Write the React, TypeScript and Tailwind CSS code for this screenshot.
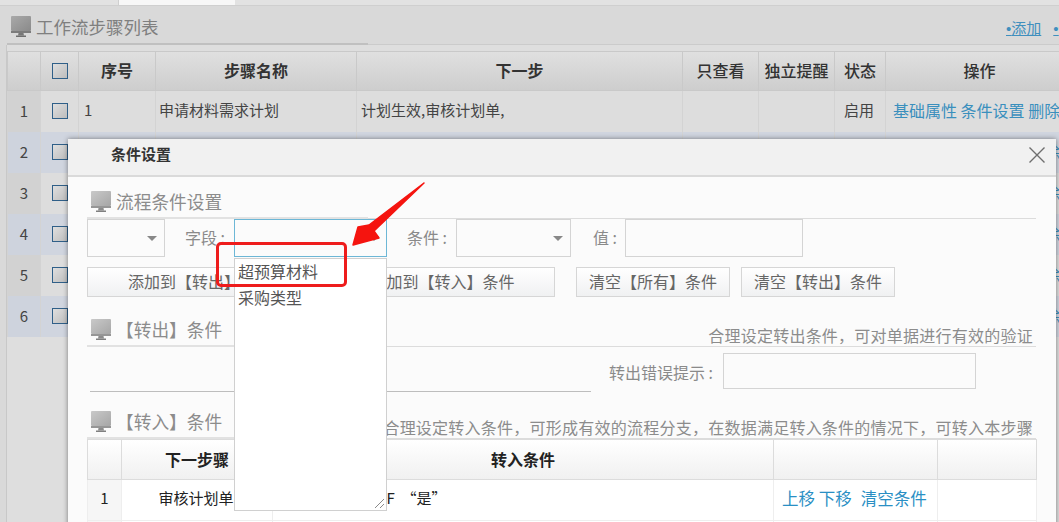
import React from "react";

const CJK = '"Noto Sans CJK SC", "Liberation Sans", sans-serif';

function Monitor({ dim = false }: { dim?: boolean }) {
  const id = dim ? "mon-a" : "mon-b";
  return (
    <svg width="20" height="21" viewBox="0 0 20 21" className="shrink-0">
      <defs>
        <linearGradient id={id} x1="0" y1="0" x2="1" y2="1">
          <stop offset="0" stopColor={dim ? "#a9a9a9" : "#c9c9c9"} />
          <stop offset="1" stopColor={dim ? "#8a8a8a" : "#a6a6a6"} />
        </linearGradient>
      </defs>
      <rect x="0" y="0" width="20" height="15" rx="1" fill={`url(#${id})`} />
      <rect x="0" y="15" width="20" height="2" fill={dim ? "#7c7c7c" : "#969696"} />
      <path d="M7.5 17h5l.5 2.5H7z" fill={dim ? "#777" : "#8c8c8c"} />
      <rect x="5" y="19.5" width="10" height="1.5" fill={dim ? "#6e6e6e" : "#808080"} />
    </svg>
  );
}

function SectionTitle({ title, hint }: { title: string; hint?: string }) {
  return (
    <div className="flex h-[30px] items-start justify-between border-b border-[#dcdcdc]">
      <div className="flex h-[30px] w-[281px] items-center gap-[5px] border-b-2 border-[#e2e2e2] pb-[3px] pl-[4px] text-[17.7px] leading-[26px] text-[#8c8c8c]">
        <Monitor />
        <span className="-mt-[1px]">{title}</span>
      </div>
      {hint && <span className="whitespace-nowrap pt-[7px] pr-[3px] text-[16px] leading-[22px] tracking-[0.24px] text-[#8c8c8c]">{hint}</span>}
    </div>
  );
}

function Select({ w, active = false }: { w: string; active?: boolean }) {
  return (
    <div
      className={`flex h-[38px] items-center justify-end border pr-[6px] ${w} ${
        active ? "border-[#6db7d6]" : "border-[#d4d4d4]"
      }`}
    >
      <span className="mr-[1px] h-0 w-0 border-x-[5px] border-t-[5px] border-x-transparent border-t-[#888]" />
    </div>
  );
}

function Btn({ label, w }: { label: string; w: string }) {
  return (
    <div
      className={`flex h-[30px] items-center justify-center border border-[#d6d6d6] bg-gradient-to-b from-white to-[#f0f1f2] pb-[3px] text-[16px] text-[#666] ${w}`}
    >
      {label}
    </div>
  );
}

function Check() {
  return (
    <span className="mx-auto block h-[16px] w-[16px] border border-[#2f5f88] bg-gradient-to-br from-[#dfdfdf] to-[#bdbdbd]" />
  );
}

const rows = [1, 2, 3, 4, 5, 6];

export default function App() {
  return (
    <div
      className="relative h-[522px] w-[1059px] overflow-hidden bg-[#d9d9d9]"
      style={{ fontFamily: CJK }}
    >
      {/* top tabs */}
      <div className="flex h-[6px] border-b border-[#cfcfcf] bg-[#e2e2e2] pl-[7px]">
        <div className="w-[112px] border-r border-[#cfcfcf]" />
        <div className="w-[116px] bg-[#f7f7f7]" />
      </div>

      {/* title */}
      <div className="ml-[7px] flex h-[39px] items-start justify-between border-b border-[#cbcbcb]">
        <div className="flex h-[39px] w-[361px] items-start gap-[5px] border-b-2 border-[#c0c0c0] pl-[4px] pt-[10px] text-[17.5px] leading-[24px] text-[#7f7f7f]">
          <Monitor dim />
          <span className="-mt-[1px]">工作流步骤列表</span>
        </div>
        <div className="flex w-[53px] gap-[12px] overflow-hidden whitespace-nowrap pt-[12px] text-[15px] leading-[20px] text-[#3f8fbe] underline">
          <span className="shrink-0"><span style={{ fontFamily: '"Liberation Sans", sans-serif' }}>•</span>添加</span>
          <span className="shrink-0"><span style={{ fontFamily: '"Liberation Sans", sans-serif' }}>•</span>修改</span>
        </div>
      </div>

      {/* list table */}
      <div className="ml-[6px] h-[480px] border-l border-[#c8c8c8] bg-[#dedede] pt-[6px]">
        <table className="w-[1100px] table-fixed border-collapse text-[#444]">
          <colgroup>
            <col className="w-[33px]" />
            <col className="w-[38px]" />
            <col className="w-[77px]" />
            <col className="w-[201px]" />
            <col className="w-[326px]" />
            <col className="w-[76px]" />
            <col className="w-[76px]" />
            <col className="w-[51px]" />
            <col className="w-[222px]" />
          </colgroup>
          <thead>
            <tr className="h-[39px] bg-gradient-to-b from-[#e0e0e0] to-[#cdcdcd] text-[16px] font-bold leading-[22px] text-[#333]">
              {["", "chk", "序号", "步骤名称", "下一步", "只查看", "独立提醒", "状态", "操作"].map((h, i) => (
                <th key={i} className={`border border-[#c9c9c9] p-0 ${h === "chk" ? "" : "pb-[2px]"} ${i === 8 ? "pr-[34px]" : ""} ${i > 4 ? "font-medium" : "font-bold"}`}>
                  {h === "chk" ? <Check /> : h}
                </th>
              ))}
            </tr>
          </thead>
          <tbody>
            {rows.map((n) => {
              const even = n % 2 === 0;
              return (
                <tr key={n} className={`h-[41px] text-[15px] ${even ? "bg-[#d0d5df]" : "bg-[#dddddd]"}`}>
                  <td className={`border-x border-[#d3d3d3] p-0 text-center text-[15px] ${even ? "bg-[#ced3dd]" : "bg-[#d2d2d2]"}`}>{n}</td>
                  <td className="border-x border-[#d3d3d3] p-0"><Check /></td>
                  <td className="border-x border-[#d3d3d3] px-[5px] py-0 pb-[2px]">{n === 1 ? "1" : ""}</td>
                  <td className="border-x border-[#d3d3d3] px-[3px] py-0 pb-[2px]">{n === 1 ? "申请材料需求计划" : ""}</td>
                  <td className="border-x border-[#d3d3d3] px-[4px] py-0 pb-[2px]">{n === 1 ? "计划生效,审核计划单," : ""}</td>
                  <td className="border-x border-[#d3d3d3] p-0" />
                  <td className="border-x border-[#d3d3d3] p-0" />
                  <td className="border-x border-[#d3d3d3] pl-[9px] py-0 pb-[2px]">启用</td>
                  <td className="whitespace-nowrap border-x border-[#d3d3d3] pl-[7px] py-0 pb-[2px] text-[16px] text-[#3a8fbd]">基础属性 条件设置 删除</td>
                </tr>
              );
            })}
          </tbody>
        </table>
      </div>

      {/* modal */}
      <div className="absolute left-[68px] top-[139px] h-[400px] w-[988px] bg-[#fbfbfb] shadow-[0_0_5px_rgba(0,0,0,0.45)]">
        <div className="flex h-[38px] items-start justify-between border-b-2 border-[#dadada] bg-[#f1f1f1] pl-[43px] pr-[10px] pt-[4px]">
          <span className="text-[15px] font-bold leading-[22px] text-[#333]">条件设置</span>
          <svg width="18" height="18" viewBox="0 0 18 18" className="mt-[3px]">
            <path d="M1.5 1.5l15 15M16.5 1.5l-15 15" stroke="#6e6e6e" strokeWidth="1.4" fill="none" />
          </svg>
        </div>

        <div className="pl-[19px] pr-[20px] pt-[12px] text-[#8a8a8a]">
          <SectionTitle title="流程条件设置" />

          <div className="flex items-center text-[16px]">
            <Select w="w-[78px]" />
            <span className="ml-[20px] -mt-[2px] w-[49px] whitespace-pre">字段 :</span>
            <Select w="w-[153px]" active />
            <span className="ml-[20px] -mt-[2px] w-[49px] whitespace-pre">条件 :</span>
            <Select w="w-[115px]" />
            <span className="ml-[22px] -mt-[2px] w-[32px] whitespace-pre">值 :</span>
            <div className="h-[38px] w-[178px] border border-[#d4d4d4]" />
          </div>

          <div className="mt-[10px] flex">
            <Btn label="添加到【转出】条件" w="w-[226px]" />
            <div className="w-[17px]" />
            <Btn label="添加到【转入】条件" w="w-[225px]" />
            <div className="w-[21px]" />
            <Btn label="清空【所有】条件" w="w-[154px]" />
            <div className="w-[11px]" />
            <Btn label="清空【转出】条件" w="w-[154px]" />
          </div>

          <div className="mt-[20px]">
            <SectionTitle title="【转出】条件" hint="合理设定转出条件，可对单据进行有效的验证" />
          </div>

          <div className="flex h-[45px] items-end">
            <div className="ml-[3px] h-[45px] w-[501px] border-b border-[#bdbdbd]" />
            <span className="mb-[7px] ml-[18px] w-[114px] whitespace-pre text-[16px] leading-[26px]">转出错误提示 :</span>
            <div className="mb-[3px] h-[36px] w-[253px] border border-[#d4d4d4]" />
          </div>

          <div className="mt-[17px]">
            <SectionTitle title="【转入】条件" hint="合理设定转入条件，可形成有效的流程分支，在数据满足转入条件的情况下，可转入本步骤" />
          </div>

          <table className="w-[949px] table-fixed border-collapse border border-[#dcdcdc] text-[#222]">
            <colgroup>
              <col className="w-[34px]" />
              <col className="w-[151px]" />
              <col className="w-[501px]" />
              <col className="w-[164px]" />
              <col className="w-[99px]" />
            </colgroup>
            <thead>
              <tr className="h-[40px] bg-gradient-to-b from-white to-[#f0f0f0] text-[16px] font-bold text-[#222]">
                {["", "下一步骤", "转入条件", "", ""].map((h, i) => (
                  <th key={i} className="border border-[#dcdcdc] p-0 pb-[2px] font-bold">{h}</th>
                ))}
              </tr>
            </thead>
            <tbody>
              <tr className="h-[41px] bg-white">
                <td className="border border-[#eeeeee] bg-[#f6f6f6] p-0 pb-[3px] text-center text-[15px]">1</td>
                <td className="border border-[#eeeeee] p-0 pb-[3px] pr-[2px] text-center text-[15px]">审核计划单</td>
                <td className="whitespace-pre border border-[#eeeeee] pb-[3px] pt-0 pl-[109px] text-[15px]">IF  “是”</td>
                <td className="border border-[#eeeeee] pb-[3px] pt-0 pl-[8px] text-[16.5px] text-[#2a8fc4]">
                  <div className="flex gap-[9px]">
                    <span>上移 下移</span>
                    <span>清空条件</span>
                  </div>
                </td>
                <td className="border border-[#eeeeee] p-0" />
              </tr>
              <tr className="h-[41px] bg-white">
                <td className="border border-[#eeeeee] bg-[#f6f6f6] p-0" />
                <td className="border border-[#eeeeee] p-0" />
                <td className="border border-[#eeeeee] p-0" />
                <td className="border border-[#eeeeee] p-0" />
                <td className="border border-[#eeeeee] p-0" />
              </tr>
            </tbody>
          </table>
        </div>
      </div>

      {/* open dropdown list */}
      <div className="absolute left-[234px] top-[258px] h-[253px] w-[153px] overflow-hidden border border-[#d0d0d0] bg-white pl-[3px] text-[16px] leading-[26px] text-[#555]">
        <div className="-mt-[1px]">超预算材料</div>
        <div>采购类型</div>
        <svg width="12" height="12" viewBox="0 0 12 12" className="absolute bottom-px right-px">
          <path d="M11 2L2 11M11 7l-4 4" stroke="#8a8a8a" strokeWidth="1" fill="none" />
        </svg>
      </div>

      {/* red annotations */}
      <div className="absolute left-[216px] top-[242px] h-[45px] w-[131px] rounded-[5px] border-[3px] border-[#ee1c1c]" />
      <svg width="90" height="80" viewBox="0 0 90 80" className="absolute left-[345px] top-[175px]">
        <path d="M79 8L24 50 13 52 8 70l26-7-5-7z" fill="#f5140f" stroke="#f5140f" strokeWidth="1.5" strokeLinejoin="round" />
      </svg>
    </div>
  );
}
